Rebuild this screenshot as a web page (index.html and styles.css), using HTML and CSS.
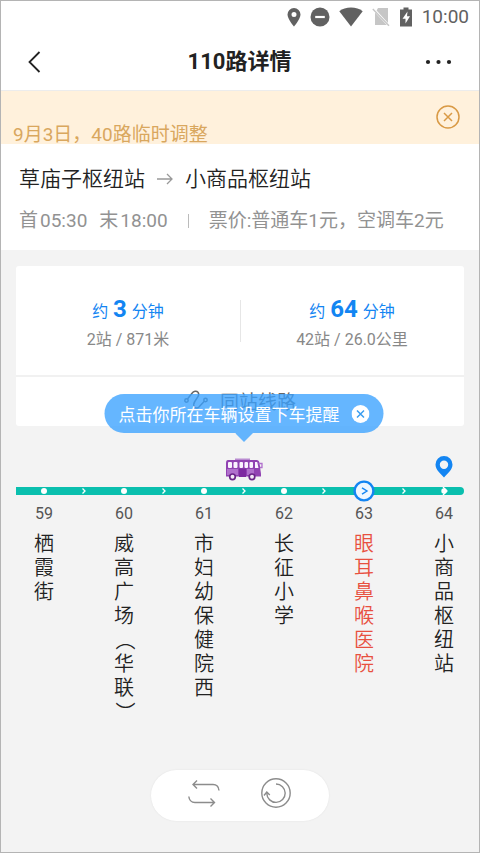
FILE: index.html
```html
<!DOCTYPE html>
<html lang="zh-CN">
<head>
<meta charset="utf-8">
<meta name="viewport" content="width=device-width, initial-scale=1">
<title>110路详情</title>
<link rel="stylesheet" href="styles.css">
</head>
<body>
<div class="screen">
  <div class="status-bar">
    <svg width="14" height="20" viewBox="0 0 14 20"><path fill="#616161" fill-rule="evenodd" d="M7 1a6.500 6.500 0 0 0-6.500 6.500C.5 12 7 19.500 7 19.500S13.500 12 13.500 7.500A6.500 6.500 0 0 0 7 1zm0 4a2.500 2.500 0 1 1 0 5 2.500 2.500 0 0 1 0-5z"/></svg>
    <svg width="20" height="20" viewBox="0 0 20 20"><circle cx="10" cy="10" r="9.500" fill="#616161"/><path stroke="#fff" stroke-width="2.200" d="M5.200 10h9.600"/></svg>
    <svg width="24" height="20" viewBox="0 0 24 20"><path fill="#616161" d="M12 19.500.3 4.200C3.400 1.800 7.400.5 12 .5s8.600 1.300 11.700 3.700z"/></svg>
    <svg width="18" height="20" viewBox="0 0 18 20"><path fill="#c6c6c6" d="M6 1h10v15L4.600 3.500zM3 5.500 14.800 18H3z"/><path stroke="#c6c6c6" stroke-width="1.400" d="M.8 2 17 18.800"/></svg>
    <svg width="14" height="20" viewBox="0 0 14 20"><path fill="#616161" d="M4.500.5h5v2H13v17H1v-17h3.500z"/><path fill="#fff" d="M8.500 4.500 3.500 11.800h3v4.700l4.500-7.300H8z"/></svg>
    <span class="clock">10:00</span>
  </div>

  <header class="nav">
    <button class="icon-button" aria-label="返回"><svg width="14" height="22" viewBox="0 0 14 22"><path fill="none" stroke="#222" stroke-width="1.800" d="M12.500 1 2.500 11l10 10"/></svg></button>
    <h1>110路详情</h1>
    <button class="icon-button" aria-label="更多"><svg width="28" height="8" viewBox="0 0 28 8"><g fill="#222"><circle cx="4" cy="4" r="2.100"/><circle cx="14.500" cy="4" r="2.100"/><circle cx="25" cy="4" r="2.100"/></g></svg></button>
  </header>

  <div class="notice">
    <p>9月3日，40路临时调整</p>
    <button class="icon-button" aria-label="关闭通知"><svg width="24" height="24" viewBox="0 0 24 24"><g fill="none" stroke="#d99a45" stroke-width="1.500"><circle cx="12" cy="12" r="11"/><path d="m8 8 8 8m0-8-8 8"/></g></svg></button>
  </div>

  <section class="route">
    <h2><span>草庙子枢纽站</span><svg width="16" height="12" viewBox="0 0 16 12"><path fill="none" stroke="#999" stroke-width="1.300" d="M0 6h14.500M10 1l5 5-5 5"/></svg><span>小商品枢纽站</span></h2>
    <div class="schedule">
      <span class="time">首<b>05:30</b></span>
      <span class="time">末<b>18:00</b></span>
      <span class="bar"></span>
      <span>票价:普通车1元，空调车2元</span>
    </div>
  </section>

  <main>
    <section class="card">
      <div class="stats">
        <div class="stat">
          <p class="eta">约 <strong>3</strong> 分钟</p>
          <p class="distance">2站 / 871米</p>
        </div>
        <div class="stat">
          <p class="eta">约 <strong>64</strong> 分钟</p>
          <p class="distance">42站 / 26.0公里</p>
        </div>
      </div>
      <a class="same-stop" href="#lines"><svg width="24" height="20" viewBox="0 0 24 20"><g fill="none" stroke="#666" stroke-width="1.500"><circle cx="2.500" cy="10.500" r="1.700"/><circle cx="21.500" cy="10" r="1.700"/><path d="M3.500 9 8.200 3C9.500 1 12.500.5 14 2.200c1.200 1.400.8 3-.2 4.600l-3 4.700c-1.200 1.900-1.500 4-.3 5.500 1.300 1.500 3.600 1.400 4.900-.4l4.900-5.300"/></g></svg><span>同站线路</span></a>
      <div class="tip">
        <span>点击你所在车辆设置下车提醒</span>
        <button class="icon-button" aria-label="关闭提示"><svg width="18" height="18" viewBox="0 0 18 18"><circle cx="9" cy="9" r="9" fill="#fff"/><path stroke="#3a9df0" stroke-width="1.500" d="m5.500 5.500 7 7m0-7-7 7"/></svg></button>
      </div>
    </section>

    <section class="line" id="lines">
      <div class="markers">
        <svg class="bus" width="38" height="24" viewBox="0 0 38 24">
          <path fill="#b98bd0" d="M10 1.500h15V4H10z"/>
          <path fill="#9142b2" d="M3 3h28.500q2.500 0 3 3L36 17v2.500H1V6q0-3 2-3z"/>
          <path fill="#b070cc" d="M2 12h11v6H2zM22 12h7v6h-7z"/>
          <path fill="#7d2aa0" d="M14 11.500h7V20h-7z"/>
          <g fill="#fbf3ff"><rect x="3" y="5" width="4" height="6" rx="1"/><rect x="8.500" y="5" width="4" height="6" rx="1"/><rect x="14.500" y="5" width="3.500" height="6" rx="1"/><rect x="19.500" y="5" width="3.500" height="6" rx="1"/><rect x="24.500" y="5" width="3.500" height="6" rx="1"/><path d="M30 5h2.200l1.300 6H30z"/></g>
          <path fill="none" stroke="#b070cc" stroke-width="1.300" d="M33.500 6.500H37v4h-2"/>
          <g fill="#f3e9f7" stroke="#6b2488" stroke-width="1.700"><circle cx="7.500" cy="19.800" r="2.800"/><circle cx="27" cy="19.800" r="2.800"/></g>
        </svg>
        <svg class="pin" width="18" height="22" viewBox="0 0 18 22"><path fill="#1385f2" fill-rule="evenodd" d="M9 0a8.500 8.500 0 0 0-8.500 8.500C.5 14 5.500 17.500 9 21.500c3.500-4 8.500-7.500 8.500-13A8.500 8.500 0 0 0 9 0zm0 4.500a4.200 4.200 0 1 1 0 8.400 4.200 4.200 0 0 1 0-8.400z"/></svg>
      </div>
      <div class="track">
        <i class="dot"></i><svg class="chev" width="4" height="6" viewBox="0 0 4 6"><path d="m.5.5 2.500 2.500L.5 5.500"/></svg>
        <i class="dot"></i><svg class="chev" width="4" height="6" viewBox="0 0 4 6"><path d="m.5.5 2.500 2.500L.5 5.500"/></svg>
        <i class="dot"></i><svg class="chev" width="4" height="6" viewBox="0 0 4 6"><path d="m.5.5 2.500 2.500L.5 5.500"/></svg>
        <i class="dot"></i><svg class="chev" width="4" height="6" viewBox="0 0 4 6"><path d="m.5.5 2.500 2.500L.5 5.500"/></svg>
        <svg width="22" height="22" viewBox="0 0 22 22"><circle cx="11" cy="11" r="9.400" fill="#eef7ff" stroke="#1385f2" stroke-width="2.400"/><path fill="none" stroke="#1385f2" stroke-width="1.400" d="M9 7.800 14 11l-5 3.200"/></svg>
        <svg class="chev" width="4" height="6" viewBox="0 0 4 6"><path d="m.5.5 2.500 2.500L.5 5.500"/></svg>
        <svg width="8" height="8" viewBox="0 0 8 8"><circle cx="4" cy="4" r="2.700" fill="#fff"/><path fill="none" stroke="#fff" stroke-width="1.300" d="M3 0l4 4-4 4"/></svg>
      </div>
      <ol class="stops">
        <li><span class="num">59</span><span class="name">栖霞街</span></li>
        <li><span class="num">60</span><span class="name">威高广场<span class="paren">（</span>华联<span class="paren">）</span></span></li>
        <li><span class="num">61</span><span class="name">市妇幼保健院西</span></li>
        <li><span class="num">62</span><span class="name">长征小学</span></li>
        <li class="current"><span class="num">63</span><span class="name">眼耳鼻喉医院</span></li>
        <li><span class="num">64</span><span class="name">小商品枢纽站</span></li>
      </ol>
    </section>

    <div class="actions">
      <button class="icon-button" aria-label="换向"><svg width="32" height="28" viewBox="0 0 32 28"><path fill="none" stroke="#8c8c8c" stroke-width="1.400" d="M9 1.500 5 5.500l4 4M5 5.500h20q5.500 0 6 6M.8 17.500q.7 6 6.200 6h19M22.500 19.500l4 4-4 4"/></svg></button>
      <button class="icon-button" aria-label="刷新"><svg width="30" height="30" viewBox="0 0 30 30"><g fill="none" stroke="#8c8c8c" stroke-width="1.400"><circle cx="15" cy="15" r="14.200"/><path d="M15 6a9.200 9.200 0 1 1-9.200 9.500M3 17.500l2.800-3.500 3 3"/></g></svg></button>
    </div>
  </main>
</div>
</body>
</html>
```

FILE: styles.css
```css
* {
  box-sizing: border-box;
}

body,
h1,
h2,
p,
ol {
  margin: 0;
  padding: 0;
}

body {
  font-family: Roboto, "Noto Sans CJK SC", sans-serif;
  font-size: 16px;
  color: #222;
}

svg {
  display: block;
  flex: none;
}

.screen {
  display: flex;
  flex-direction: column;
  min-height: 100vh;
  border: 1px solid #b4b4b4;
  background: #fff;
}

.icon-button {
  display: flex;
  align-items: center;
  justify-content: center;
  padding: 0;
  border: 0;
  background: none;
}

.status-bar {
  display: flex;
  align-items: center;
  justify-content: flex-end;
  gap: 9px;
  height: 32px;
  padding-right: 10px;
}

.clock {
  font-size: 19px;
  line-height: 24px;
  color: #616161;
}

.nav {
  display: flex;
  align-items: center;
  justify-content: space-between;
  height: 58px;
  padding: 0 27px 0 26px;
  border-bottom: 1px solid #ececec;
}

.nav .icon-button {
  width: 28px;
  height: 32px;
}

.nav .icon-button:first-child {
  justify-content: flex-start;
}

.nav h1 {
  font-size: 22px;
  line-height: 32px;
}

.notice {
  display: flex;
  align-items: flex-start;
  justify-content: space-between;
  height: 53px;
  padding: 14px 19px 0 12px;
  background: #fff1dc;
}

.notice p {
  margin-top: 17px;
  font-size: 19px;
  line-height: 26px;
  color: #d9a75e;
}

.route {
  padding: 20px 18px 15px;
}

.route h2 {
  display: flex;
  align-items: center;
  gap: 12px;
  font-size: 21px;
  font-weight: 350;
  line-height: 30px;
}

.schedule {
  display: flex;
  align-items: center;
  margin-top: 13px;
  font-size: 19px;
  line-height: 28px;
  color: #929292;
}

.time {
  display: flex;
  gap: 2px;
  margin-right: 12px;
}

.time b {
  font-weight: inherit;
}

.bar {
  width: 1px;
  height: 14px;
  margin: 0 20px 0 8px;
  background: #bbb;
}

main {
  display: flex;
  flex: 1;
  flex-direction: column;
  padding: 16px 15px 31px;
  background: #f3f3f3;
}

.card {
  position: relative;
  border-radius: 3px;
  background: #fff;
}

.stats {
  display: flex;
  padding: 26px 0 24px;
  border-bottom: 2px solid #f1f1f1;
}

.stat {
  flex: 1;
  text-align: center;
}

.stat + .stat {
  background: linear-gradient(#e6e6e6, #e6e6e6) left 0 top 8px / 1px 42px no-repeat;
}

.eta {
  line-height: 34px;
  color: #1385f2;
}

.eta strong {
  margin: 0 1px;
  font-size: 24px;
}

.distance {
  line-height: 22px;
  color: #888;
}

.same-stop {
  display: flex;
  align-items: center;
  justify-content: center;
  gap: 12px;
  height: 49px;
  padding-bottom: 3px;
  font-size: 19px;
  color: #666;
  text-decoration: none;
}

.tip {
  position: absolute;
  top: 128px;
  left: calc(50% + 4px);
  display: flex;
  align-items: center;
  gap: 12px;
  height: 39px;
  padding: 0 14px;
  border-radius: 20px;
  background: rgba(58, 161, 255, 0.78);
  font-size: 17px;
  white-space: nowrap;
  color: #fff;
  transform: translateX(-50%);
}

.tip::after {
  position: absolute;
  top: 100%;
  left: 50%;
  width: 18px;
  height: 9px;
  margin-left: -9px;
  background: rgba(58, 161, 255, 0.78);
  clip-path: polygon(0 0, 100% 0, 50% 100%);
  content: "";
}

.line {
  margin-top: 28px;
}

.markers,
.track {
  display: grid;
  grid-template-columns: repeat(11, 1fr);
  justify-items: center;
  padding-left: 8px;
}

.markers {
  height: 33px;
}

.bus {
  grid-column: 6;
  margin-top: 3px;
}

.pin {
  grid-column: 11;
  margin-top: 2px;
}

.track {
  align-items: center;
  height: 8px;
  border-radius: 0 4px 4px 0;
  background: #0abfae;
}

.track > * {
  margin: -7px 0;
}

.dot {
  width: 6px;
  height: 6px;
  border-radius: 50%;
  background: #fff;
}

.chev {
  fill: none;
  stroke: #fff;
  stroke-width: 1.300px;
}

.stops {
  display: flex;
  justify-content: space-between;
  padding-left: 8px;
  margin-top: 9px;
  list-style: none;
}

.stops li {
  display: flex;
  flex-direction: column;
  align-items: center;
  gap: 8px;
  width: 40px;
}

.num {
  line-height: 20px;
  color: #555;
}

.name {
  width: 20px;
  font-size: 20px;
  font-weight: 350;
  line-height: 24px;
  word-break: break-all;
}

.paren {
  display: block;
  height: 20px;
  margin: 2px 0;
  line-height: 20px;
  writing-mode: vertical-rl;
}

.current .name {
  color: #e8503f;
}

.actions {
  display: flex;
  align-items: center;
  justify-content: center;
  gap: 41px;
  width: 178px;
  height: 51px;
  margin: auto auto 0;
  padding: 0 2px 5px 0;
  border-radius: 26px;
  background: #fff;
  box-shadow: 0 0 2px rgba(0, 0, 0, 0.08);
}
```
